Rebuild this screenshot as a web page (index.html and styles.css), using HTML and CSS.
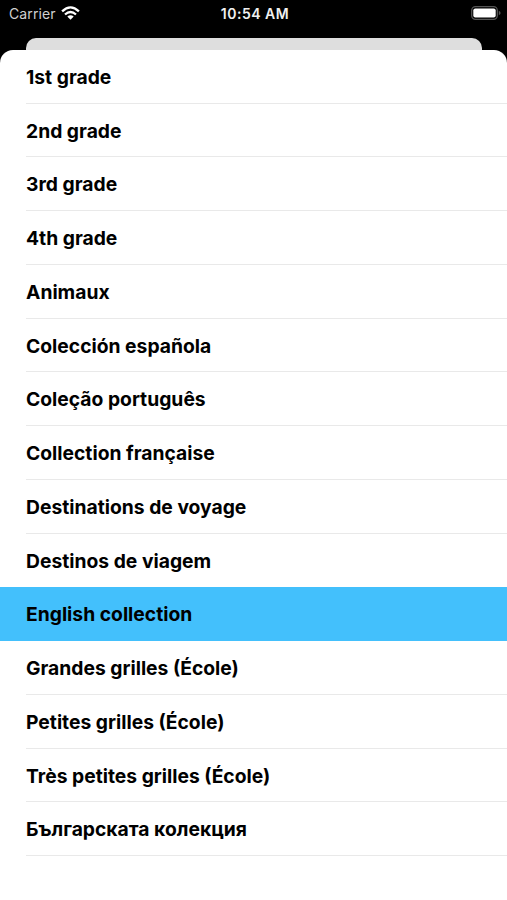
FILE: index.html
```html
<!DOCTYPE html>
<html lang="en">
<head>
<meta charset="utf-8">
<title>Collections</title>
<link rel="stylesheet" href="styles.css">
</head>
<body>
<header class="status">
<div class="carrier"><span>Carrier</span>
<svg class="wifi" width="19" height="14" viewBox="0 0 19 14" fill="none" stroke="#fff" stroke-width="2.3"><path d="M1.1 5.3Q9.5-2.6 17.9 5.3"/><path d="M4 8.5Q9.5 3.5 15 8.5"/><path d="M6.3 10.6Q9.5 7.9 12.7 10.6L9.5 13.8Z" fill="#fff" stroke="none"/></svg></div>
<time class="clock">10:54 AM</time>
<svg class="battery" width="30" height="14" viewBox="0 0 30 14"><rect x=".7" y=".7" width="25.6" height="12.6" rx="3.8" fill="none" stroke="#555" stroke-width="1.3"/><rect x="2.3" y="2.4" width="22.4" height="9.2" rx="2" fill="#fff"/><path d="M27.8 4.8Q29.6 5.5 29.6 7T27.8 9.2Z" fill="#555"/></svg>
</header>
<div class="backdrop"></div>
<main class="sheet">
<ul class="list">
<li><span>1st grade</span></li>
<li><span>2nd grade</span></li>
<li><span>3rd grade</span></li>
<li><span>4th grade</span></li>
<li><span>Animaux</span></li>
<li><span>Colección española</span></li>
<li><span>Coleção português</span></li>
<li><span>Collection française</span></li>
<li><span>Destinations de voyage</span></li>
<li class="before-selected"><span>Destinos de viagem</span></li>
<li class="selected"><span>English collection</span></li>
<li><span>Grandes grilles (École)</span></li>
<li><span>Petites grilles (École)</span></li>
<li><span>Très petites grilles (École)</span></li>
<li><span>Българската колекция</span></li>
</ul>
</main>
</body>
</html>
```
FILE: styles.css
```css
* { box-sizing: border-box; }
body {
  margin: 0;
  height: 900px;
  display: flex;
  flex-direction: column;
  overflow: hidden;
  background: #000;
  font-family: Inter, "Liberation Sans", sans-serif;
}
.status {
  height: 38px;
  padding: 6px 6px 0 9px;
  display: grid;
  grid-template-columns: 1fr auto 1fr;
  align-items: start;
  color: #f0f0f0;
  font-size: 14px;
  line-height: 16px;
}
.carrier { display: flex; gap: 5px; color: #d0d0d0; letter-spacing: .1px; }
.clock { font-weight: 600; letter-spacing: .5px; }
.battery { justify-self: end; }
.backdrop {
  height: 12px;
  margin: 0 25px 0 26px;
  background: #dedede;
  border-radius: 10px 10px 0 0;
}
.sheet {
  flex: 1;
  background: #fff;
  border-radius: 13px 13px 0 0;
}
.list { margin: 0; padding: 0; list-style: none; }
.list li {
  height: 53.74px;
  padding-left: 26px;
}
.list span {
  display: block;
  height: 100%;
  border-bottom: 1px solid #e9e9e9;
  font-size: 19.3px;
  font-weight: 650;
  line-height: 54.4px;
  letter-spacing: 0;
  color: #000;
}
.list .selected { background: #43c0fc; }
.list .selected span,
.list .before-selected span { border-color: transparent; }
```
